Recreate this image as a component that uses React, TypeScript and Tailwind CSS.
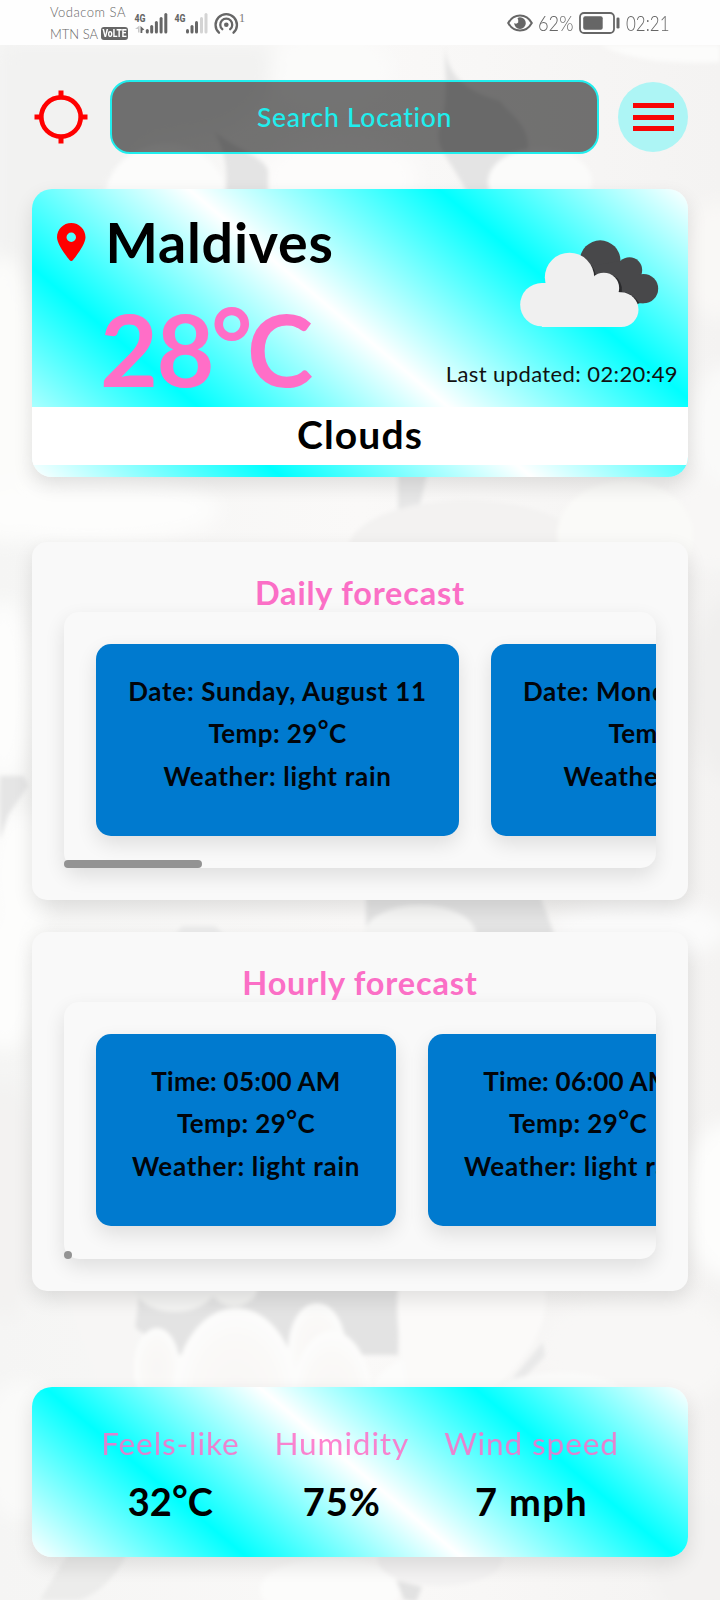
import type { ReactNode } from "react";
import { FaLocationDot } from "react-icons/fa6";

function Backdrop() {
  return (
    <svg className="absolute inset-0 h-full w-full" viewBox="0 0 720 1600" aria-hidden="true">
      <defs>
        <linearGradient id="base" x1="0" y1="0" x2="1" y2="0">
          <stop offset="0" stopColor="#f5f5f4" />
          <stop offset="0.5" stopColor="#faf9f8" />
          <stop offset="1" stopColor="#f4f3f2" />
        </linearGradient>
        <radialGradient id="pebble" cx="0.5" cy="0.5" r="0.5">
          <stop offset="0" stopColor="#f8f7f5" />
          <stop offset="0.7" stopColor="#faf9f8" />
          <stop offset="1" stopColor="#fdfdfc" />
        </radialGradient>
        <filter id="soft" x="-5%" y="-5%" width="110%" height="110%">
          <feGaussianBlur stdDeviation="2" />
        </filter>
        <filter id="haze" x="-5%" y="-5%" width="110%" height="110%">
          <feGaussianBlur stdDeviation="9" />
        </filter>
      </defs>
      <rect width="720" height="1600" fill="url(#base)" />
      <g filter="url(#haze)">
        <path d="M0 45H270C280 90 250 120 213 130L150 140L105 190V240L0 330Z" fill="#f2f2f1" />
        <ellipse cx="340" cy="180" rx="78" ry="46" fill="#fdfcfb" />
        <ellipse cx="330" cy="70" rx="60" ry="40" fill="#fbfbfa" />
        <ellipse cx="4" cy="400" rx="36" ry="145" fill="#fcfcfa" />
        <ellipse cx="720" cy="260" rx="42" ry="58" fill="#f9f8f6" />
        <ellipse cx="730" cy="430" rx="40" ry="66" fill="#fafaf9" />
        <ellipse cx="90" cy="510" rx="130" ry="34" fill="#fdfdfc" />
        <ellipse cx="720" cy="525" rx="62" ry="46" fill="#f8f7f6" />
        <ellipse cx="730" cy="690" rx="40" ry="90" fill="#f0efee" />
        <ellipse cx="4" cy="690" rx="30" ry="90" fill="#fdfdfc" />
        <ellipse cx="20" cy="875" rx="34" ry="66" fill="#fdfdfc" />
        <ellipse cx="5" cy="980" rx="34" ry="70" fill="#fdfdfc" />
        <ellipse cx="5" cy="1200" rx="34" ry="120" fill="#f3f2f1" />
        <ellipse cx="640" cy="930" rx="88" ry="30" fill="#fbfbfb" />
        <ellipse cx="735" cy="1200" rx="54" ry="80" fill="#fdfdfc" />
        <ellipse cx="640" cy="1350" rx="96" ry="62" fill="#f8f7f6" />
        <ellipse cx="20" cy="1450" rx="40" ry="70" fill="#fafaf9" />
        <ellipse cx="700" cy="1560" rx="50" ry="60" fill="#f3f2f1" />
      </g>
      <g filter="url(#soft)">
        <ellipse cx="166" cy="200" rx="61" ry="56" fill="#fcfcfb" />
        <path d="M213 130C235 150 262 155 268 170V195H225C229 170 225 150 213 130Z" fill="#e4e4e4" />
        <path d="M445 45C446 70 460 90 500 101C510 115 530 125 528 150C510 160 495 175 490 195H468C455 165 435 150 439 130C450 100 444 70 445 45Z" fill="#e4e4e4" />
        <ellipse cx="540" cy="182" rx="52" ry="34" fill="#fbfbfa" />
        <path d="M600 45H720V62Q640 66 600 45Z" fill="#fcfcfb" />
        <path d="M398 470H428L420 505L398 510Z" fill="#e6e6e6" />
        <ellipse cx="466" cy="550" rx="118" ry="50" fill="#f3f2f1" />
        <ellipse cx="625" cy="535" rx="68" ry="54" fill="#fafaf8" />
        <path d="M0 776H24L28 786L8 815L0 840Z" fill="#e5e5e5" />
        <path d="M175 936L182 926H215L225 936Z" fill="#ececec" />
        <path d="M366 895H540L556 940H366Z" fill="#e4e4e4" />
        <ellipse cx="420" cy="935" rx="56" ry="30" fill="#f6f6f5" />
        <path d="M100 1285H400L398 1355H180L138 1330Z" fill="#e3e3e3" />
        <path d="M60 1280H138C140 1300 136 1320 134 1335L140 1385H100Z" fill="#f7f6f5" />
        <ellipse cx="175" cy="1285" rx="42" ry="27" fill="#f4f4f3" />
        <ellipse cx="234" cy="1286" rx="24" ry="20" fill="#f4f4f3" />
        <ellipse cx="157" cy="1368" rx="23" ry="40" fill="url(#pebble)" />
        <ellipse cx="236" cy="1400" rx="63" ry="92" fill="url(#pebble)" />
        <ellipse cx="317" cy="1350" rx="29" ry="47" fill="url(#pebble)" />
        <ellipse cx="332" cy="1405" rx="41" ry="74" fill="url(#pebble)" />
        <ellipse cx="430" cy="1400" rx="60" ry="46" fill="#fcfcfb" />
        <path d="M398 1285H545C550 1325 530 1360 480 1400H410C400 1350 395 1320 398 1285Z" fill="#fbfaf9" />
        <path d="M543 1342L512 1379L526 1376L545 1356Z" fill="#e9e9e9" />
        <ellipse cx="560" cy="1420" rx="84" ry="48" fill="#fafaf9" />
        <path d="M70 1550H130C115 1575 105 1590 80 1600H40Z" fill="#ececeb" />
        <ellipse cx="330" cy="1590" rx="70" ry="32" fill="#fcfcfb" />
        <ellipse cx="440" cy="1560" rx="62" ry="26" fill="#f3f2f2" />
        <path d="M396 1580L422 1587L416 1602L404 1600Z" fill="#e2e2e2" />
      </g>
    </svg>
  );
}

function StatusBar() {
  return (
    <div className="relative flex h-[45px] items-center justify-between bg-[#fefefe] pr-[50px] pl-[50px] text-[#666]">
      <div className="flex items-center">
        <div className="flex w-[78px] flex-col text-[13px] leading-[22px] font-light tracking-[0.5px] whitespace-nowrap">
          <span>Vodacom SA</span>
          <span className="flex items-center gap-[3px] tracking-normal">
            MTN SA
            <span className="flex h-[13px] w-[27px] shrink-0 items-center justify-center rounded-[3px] bg-[#666] text-white">
              <span className="scale-x-[0.78] font-['Roboto'] text-[11px] leading-[13px] font-extrabold tracking-normal">VoLTE</span>
            </span>
          </span>
        </div>
        <svg className="ml-[6px] h-[26px] w-[112px]" viewBox="134 9 112 26" fill="#666">
          <text x="134.500" y="20.500" fontFamily="Roboto" fontWeight="800" fontSize="11.500" textLength="11" lengthAdjust="spacingAndGlyphs">4G</text>
          <path d="M135 28l4.500-3.500v7h-1.500v-3.500z" fill="#c8c8c8" />
          <path d="M140.500 25v7h1.800v-2.500l2-1z" />
          <rect x="145.800" y="28" width="3" height="4.500" rx="1.500" />
          <rect x="150.200" y="24" width="3" height="8.500" rx="1.500" />
          <rect x="154.900" y="20" width="3" height="12.500" rx="1.500" />
          <rect x="159.600" y="16" width="3" height="16.500" rx="1.500" />
          <rect x="164.300" y="12" width="3" height="20.500" rx="1.500" />
          <text x="174.500" y="20.500" fontFamily="Roboto" fontWeight="800" fontSize="11.500" textLength="11" lengthAdjust="spacingAndGlyphs">4G</text>
          <rect x="186" y="28" width="3" height="4.500" rx="1.500" />
          <rect x="190.500" y="24" width="3" height="8.500" rx="1.500" />
          <rect x="195" y="20" width="3" height="12.500" rx="1.500" />
          <rect x="200" y="16" width="3" height="16.500" rx="1.500" fill="#d4d4d4" />
          <rect x="204.500" y="12" width="3" height="20.500" rx="1.500" fill="#d4d4d4" />
          <g fill="none" stroke="#666" strokeWidth="2.300" strokeLinecap="round">
            <path d="M219 31.700A10.700 10.700 0 1 1 233.500 31.700" />
            <path d="M222.300 28.200A6 6 0 1 1 230.200 28.200" />
          </g>
          <circle cx="226.300" cy="23.800" r="2.300" />
          <text x="239" y="21" fontFamily="Liberation Serif" fontSize="12" fill="#777">1</text>
        </svg>
      </div>
      <div className="flex items-center text-[21px] leading-[26px] font-light">
        <svg className="h-[18px] w-[26px]" viewBox="0 0 26 18">
          <path d="M1.200 9C4 4 8 1.500 13 1.500S22 4 24.800 9C22 14 18 16.500 13 16.500S4 14 1.200 9Z" fill="none" stroke="#666" strokeWidth="2" />
          <path d="M13 3.300A5.800 5.800 0 1 1 7.200 9Q9.500 10.500 11.200 8.500Q12 6.500 10.500 4.200Q11.500 3.300 13 3.300Z" fill="#666" />
        </svg>
        <span className="ml-[5px] w-[41px]"><span className="inline-block origin-left scale-x-[0.87]">62%</span></span>
        <svg className="h-[22px] w-[42px]" viewBox="0 0 42 22">
          <rect x="1" y="1" width="34" height="20" rx="4" fill="none" stroke="#666" strokeWidth="1.800" />
          <rect x="4.200" y="4.200" width="19.500" height="13.600" rx="2" fill="#666" />
          <rect x="37.500" y="5.500" width="3" height="11" rx="1.300" fill="#666" />
        </svg>
        <span className="ml-[5px] w-[44px]"><span className="inline-block origin-left scale-x-[0.81]">02:21</span></span>
      </div>
    </div>
  );
}

function Header() {
  return (
    <header className="relative mt-[35px] flex h-[74px] items-center pr-[32px] pl-[34px]">
      <svg className="h-[54px] w-[54px] shrink-0" viewBox="0 0 54 54">
        <circle cx="27" cy="27" r="19.700" fill="none" stroke="#f00" strokeWidth="4.700" />
        <path d="M24.500 0.500h5v6h-5zM24.500 47.500h5v6h-5zM0.500 24.500h6v5h-6zM47.500 24.500h6v5h-6z" fill="#f00" />
      </svg>
      <div className="ml-[22px] flex h-[74px] flex-1 items-center justify-center rounded-[20px] border-2 border-[#1feeee] bg-black/54 pb-px text-[26.5px] leading-8 font-medium tracking-[0.7px] text-[#1feeee]">
        Search Location
      </div>
      <button className="ml-[19px] flex h-[70px] w-[70px] shrink-0 flex-col items-center justify-center gap-[6.5px] rounded-full bg-[#adf5f5]" aria-label="Menu">
        <span className="h-[5px] w-[41px] bg-[#f80505]" />
        <span className="h-[5px] w-[41px] bg-[#f80505]" />
        <span className="h-[5px] w-[41px] bg-[#f80505]" />
      </button>
    </header>
  );
}

function CloudIcon() {
  return (
    <svg className="h-[87px] w-[139px]" viewBox="480 211 416 261">
      <g fill="#48484a">
        <circle cx="720" cy="273" r="61" />
        <circle cx="808" cy="301" r="38" />
        <circle cx="850" cy="357" r="44" />
        <path d="M690 290L800 270L850 330L850 401H800Z" />
      </g>
      <g fill="#2a2a2c">
        <path d="M662 262A76 76 0 0 1 708 322A48 48 0 0 1 785 366Q815 368 838 400L800 420L640 330Z" />
      </g>
      <g fill="#f0f0f0">
        <circle cx="545" cy="405" r="65" />
        <circle cx="628" cy="323" r="74" />
        <circle cx="731" cy="355" r="46" />
        <circle cx="783" cy="420" r="52" />
        <path d="M545 340H700L783 370V472H545Z" />
      </g>
    </svg>
  );
}

const stripes = "bg-[linear-gradient(40deg,#fff,#0ff,#fff,#0ff,#fff)]";
const lift = "shadow-[0_8px_20px_rgba(0,0,0,0.11)]";

function Current() {
  return (
    <section className={`relative mx-8 mt-[35px] h-[288px] overflow-hidden rounded-[20px] ${stripes} ${lift}`}>
      <div className="flex h-[218px] justify-between">
        <div className="pt-[20px]">
          <div className="flex h-[66px] items-center pl-[25px]">
            <FaLocationDot className="-mt-[1px] h-[38px] w-[28.5px] text-[#f00]" />
            <h1 className="ml-[20px] text-[55.5px] leading-[66px] font-bold tracking-[0.8px]">Maldives</h1>
          </div>
          <p className="mt-[23px] pl-[68px] text-[100px] leading-[100px] font-bold tracking-[-1.5px] whitespace-nowrap text-[#ff6ec7]">
            28<span className="inline-block -translate-x-[2px] -translate-y-[7px]">°</span><span className="-ml-[6px]">C</span>
          </p>
        </div>
        <div className="flex flex-col items-end pt-[51px] pr-[10px]">
          <div className="mr-[19px]"><CloudIcon /></div>
          <p className="mt-[34px] text-[22px] leading-[26px] tracking-[0.4px] whitespace-nowrap text-[#111]">Last updated: 02:20:49</p>
        </div>
      </div>
      <div className="h-[58px] bg-white text-center text-[39px] leading-[55px] font-bold tracking-[1.1px]">Clouds</div>
    </section>
  );
}

function Tile({ children, width }: { children: ReactNode; width: string }) {
  return (
    <div className={`h-[192px] shrink-0 rounded-[15px] bg-[#007acf] pt-[25.5px] text-center text-[26px] leading-[42.8px] font-bold whitespace-nowrap text-[#02050a] ${width} ${lift}`}>
      {children}
    </div>
  );
}

function Degrees({ value }: { value: string }) {
  return (
    <>
      {value}
      <span className="inline-block -translate-y-[3px]">°</span>C
    </>
  );
}

type Entry = { label: string; temp: string; weather: string; width: string };

function Forecast({ title, entries, height, labelTracking, thumb }: { title: string; entries: Entry[]; height: string; labelTracking: string; thumb: string }) {
  return (
    <section className={`relative mx-8 flex flex-col rounded-[15px] bg-[#f9f9f9] p-8 ${height} ${lift}`}>
      <h2 className="relative z-10 text-center text-[32.5px] leading-[38px] font-bold tracking-[0.8px] text-[#fb6fc6]">{title}</h2>
      <div className={`relative flex-1 rounded-[15px] bg-[#f9f9f9] ${lift}`}>
        <div className="flex h-full gap-8 overflow-hidden rounded-[15px] p-8">
          {entries.map((e) => (
            <Tile key={e.label} width={e.width}>
              <p className={labelTracking}>{e.label}</p>
              <p className="tracking-[0.4px]"><Degrees value={e.temp} /></p>
              <p className="tracking-[0.7px]">{e.weather}</p>
            </Tile>
          ))}
        </div>
        <span className={`absolute bottom-0 left-0 h-2 rounded-full bg-[#939393] ${thumb}`} />
      </div>
    </section>
  );
}

const days: Entry[] = [
  { label: "Date: Sunday, August 11", temp: "Temp: 29", weather: "Weather: light rain", width: "w-[363px]" },
  { label: "Date: Monday, August 12", temp: "Temp: 29", weather: "Weather: light rain", width: "w-[373px]" },
];
const hours: Entry[] = [
  { label: "Time: 05:00 AM", temp: "Temp: 29", weather: "Weather: light rain", width: "w-[300px]" },
  { label: "Time: 06:00 AM", temp: "Temp: 29", weather: "Weather: light rain", width: "w-[300px]" },
];

function Stat({ label, children, tracking }: { label: string; children: ReactNode; tracking: string }) {
  return (
    <div className="text-center">
      <p className="text-[31.5px] leading-[38px] tracking-[0.9px] text-[#ff6ec7] opacity-85">{label}</p>
      <p className={`mt-4 text-[38px] leading-[46px] font-bold ${tracking}`}>{children}</p>
    </div>
  );
}

export default function App() {
  return (
    <div className="relative h-[1600px] w-[720px] overflow-hidden font-['Lato','Liberation_Sans',sans-serif] text-black">
      <Backdrop />
      <StatusBar />
      <Header />
      <div className="relative">
        <Current />
        <div className="mt-[65px]">
          <Forecast title="Daily forecast" entries={days} height="h-[358px]" labelTracking="tracking-[0.7px]" thumb="w-[138px]" />
        </div>
        <div className="mt-8">
          <Forecast title="Hourly forecast" entries={hours} height="h-[359px]" labelTracking="tracking-[0.25px]" thumb="w-2" />
        </div>
        <section className={`relative mx-8 mt-24 flex h-[170px] justify-center gap-[35px] rounded-[20px] pt-[37px] ${stripes} ${lift}`}>
          <Stat label="Feels-like" tracking="tracking-normal"><Degrees value="32" /></Stat>
          <Stat label="Humidity" tracking="tracking-[1px]">75%</Stat>
          <Stat label="Wind speed" tracking="tracking-[1.4px]">7 mph</Stat>
        </section>
      </div>
    </div>
  );
}
